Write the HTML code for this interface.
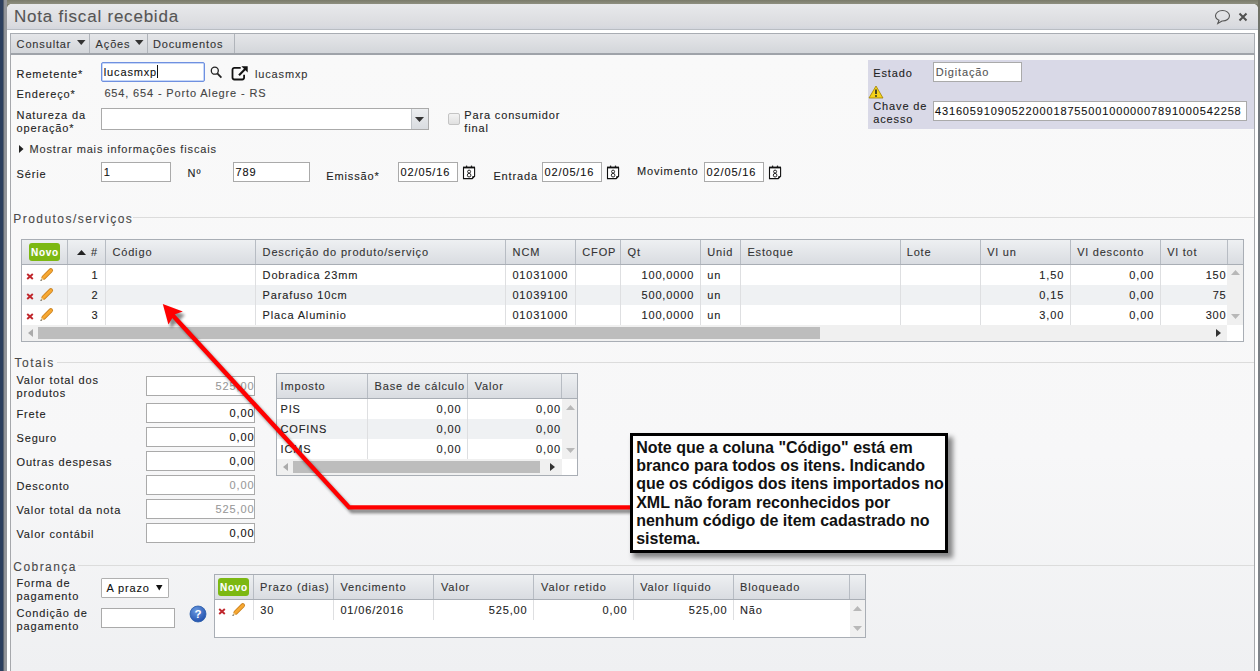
<!DOCTYPE html>
<html><head><meta charset="utf-8"><style>
html,body{margin:0;padding:0;}
body{width:1260px;height:671px;position:relative;overflow:hidden;background:#7d7e6e;font-family:"Liberation Sans",sans-serif;}
.t{position:absolute;white-space:nowrap;font-family:"Liberation Sans",sans-serif;-webkit-text-stroke:0.1px currentColor;}
svg{position:absolute;overflow:visible;}
</style></head><body>

<div style="position:absolute;left:0px;top:0px;width:1260px;height:4px;box-sizing:border-box;background:linear-gradient(#7a7b6a,#8e8f7f);"></div>
<div style="position:absolute;left:0px;top:0px;width:3px;height:671px;box-sizing:border-box;background:#2c3f5e;"></div>
<div style="position:absolute;left:3px;top:0px;width:4px;height:671px;box-sizing:border-box;background:linear-gradient(90deg,#3e4a5a,#94969a 40%);"></div>
<div style="position:absolute;left:1258px;top:0px;width:2px;height:671px;box-sizing:border-box;background:linear-gradient(#6f705f 0px,#70767c 60px,#80848a 671px);"></div>
<div style="position:absolute;left:7px;top:4px;width:1251px;height:667px;box-sizing:border-box;background:#fff;border-radius:5px 5px 0 0;"></div>
<div style="position:absolute;left:10px;top:55px;width:1245px;height:616px;box-sizing:border-box;background:linear-gradient(#f9f9f9 0px,#f7f7f8 400px,#eff0f2 616px);border-left:1px solid #a6a8ac;border-right:1px solid #a6a8ac;"></div>
<div style="position:absolute;left:7px;top:4px;width:1251px;height:26px;box-sizing:border-box;background:linear-gradient(#e8e9eb,#dadbdf 85%,#d3d6dd);border-bottom:1px solid #b9bdc3;border-radius:5px 5px 0 0;"></div>
<div class="t" style="top:7px;font-size:17px;letter-spacing:0.78px;color:#555;line-height:20.4px;left:14.00px;">Nota fiscal recebida</div>
<svg style="left:1214px;top:9px" width="18" height="16" viewBox="0 0 18 16"><path d="M8.5 1.5C4.4 1.5 1.5 3.9 1.5 6.8c0 2 1.4 3.6 3.5 4.5L3.8 14.5l4.2-2.5c.2 0 .4 0 .5 0 4.1 0 7-2.4 7-5.2S12.6 1.5 8.5 1.5z" fill="none" stroke="#555" stroke-width="1.1"/></svg>
<svg style="left:1238px;top:12px" width="10" height="10" viewBox="0 0 10 10"><path d="M1.5 1.5L8.5 8.5M8.5 1.5L1.5 8.5" stroke="#505050" stroke-width="2"/></svg>
<div style="position:absolute;left:10px;top:33px;width:1245px;height:22px;box-sizing:border-box;background:linear-gradient(#e5e6e9,#d3d6da);border:1px solid #a9adb3;border-bottom:2px solid #9fa3a9;"></div>
<div style="position:absolute;left:89px;top:34px;width:1px;height:19px;box-sizing:border-box;background:#b0b4ba;"></div>
<div style="position:absolute;left:147px;top:34px;width:1px;height:19px;box-sizing:border-box;background:#b0b4ba;"></div>
<div style="position:absolute;left:234px;top:34px;width:1px;height:19px;box-sizing:border-box;background:#b0b4ba;"></div>
<div class="t" style="top:38px;font-size:11px;letter-spacing:0.85px;color:#333;line-height:13px;left:16.60px;">Consultar</div>
<svg style="left:77px;top:40px" width="8.5" height="5"><path d="M0 0H8.5L4.25 5z" fill="#333"/></svg>
<div class="t" style="top:38px;font-size:11px;letter-spacing:0.85px;color:#333;line-height:13px;left:95.60px;">Ações</div>
<svg style="left:135px;top:40px" width="8.5" height="5"><path d="M0 0H8.5L4.25 5z" fill="#333"/></svg>
<div class="t" style="top:38px;font-size:11px;letter-spacing:0.85px;color:#333;line-height:13px;left:153.00px;">Documentos</div>
<div class="t" style="top:68px;font-size:11px;letter-spacing:0.85px;color:#222;line-height:13px;left:16.60px;">Remetente*</div>
<div style="position:absolute;left:101px;top:62px;width:104px;height:20px;box-sizing:border-box;background:#fff;border:1px solid #6f90e0;border-radius:2px;box-shadow:inset 0 0 0 0.5px #8fb0f0;"></div>
<div class="t" style="top:66px;font-size:11px;letter-spacing:0.85px;color:#111;line-height:13px;left:103.80px;">lucasmxp</div>
<div style="position:absolute;left:157px;top:65px;width:1px;height:13px;box-sizing:border-box;background:#111;"></div>
<svg style="left:210px;top:66px" width="13" height="13" viewBox="0 0 13 13"><circle cx="4.8" cy="4.7" r="3.5" fill="none" stroke="#222" stroke-width="1.3"/><path d="M7.3 7.3L11.4 11.6" stroke="#222" stroke-width="1.8"/></svg>
<svg style="left:231px;top:65px" width="18" height="16" viewBox="0 0 18 16"><path d="M9.7 2.9H3.4C2.3 2.9 1.5 3.7 1.5 4.8V12.6C1.5 13.7 2.3 14.5 3.4 14.5H11.2C12.3 14.5 13.1 13.7 13.1 12.6V9.8" fill="none" stroke="#111" stroke-width="1.8"/><path d="M8 10.2L14.2 4" stroke="#111" stroke-width="2.1"/><path d="M10.4 1.2H16.7V7.5z" fill="#111"/></svg>
<div class="t" style="top:68px;font-size:11px;letter-spacing:0.85px;color:#333;line-height:13px;left:255.00px;">lucasmxp</div>
<div class="t" style="top:88px;font-size:11px;letter-spacing:0.85px;color:#222;line-height:13px;left:16.60px;">Endereço*</div>
<div class="t" style="top:87px;font-size:11px;letter-spacing:0.85px;color:#444;line-height:13px;left:104.40px;">654, 654 - Porto Alegre - RS</div>
<div class="t" style="top:109px;font-size:11px;letter-spacing:0.85px;color:#222;line-height:13px;left:16.60px;">Natureza da</div>
<div class="t" style="top:122px;font-size:11px;letter-spacing:0.85px;color:#222;line-height:13px;left:16.60px;">operação*</div>
<div style="position:absolute;left:101px;top:108px;width:328px;height:22px;box-sizing:border-box;background:#fff;border:1px solid #aaaaaa;"></div>
<div style="position:absolute;left:411px;top:109px;width:17px;height:20px;box-sizing:border-box;background:linear-gradient(#eceef0,#d9dce0);border-left:1px solid #c0c4c8;"></div>
<svg style="left:415px;top:117px" width="9" height="5"><path d="M0 0H9L4.5 5z" fill="#333"/></svg>
<div style="position:absolute;left:448px;top:113px;width:12px;height:12px;box-sizing:border-box;background:linear-gradient(#f3f3f3,#e0e0e0);border:1px solid #c4c4c4;border-radius:2px;"></div>
<div class="t" style="top:109px;font-size:11px;letter-spacing:0.85px;color:#222;line-height:13px;left:464.30px;">Para consumidor</div>
<div class="t" style="top:122px;font-size:11px;letter-spacing:0.85px;color:#222;line-height:13px;left:464.30px;">final</div>
<svg style="left:19px;top:145px" width="4.5" height="8"><path d="M0 0V8L4.5 4.0z" fill="#222"/></svg>
<div class="t" style="top:143px;font-size:11px;letter-spacing:0.85px;color:#333;line-height:13px;left:29.50px;">Mostrar mais informações fiscais</div>
<div class="t" style="top:168px;font-size:11px;letter-spacing:0.85px;color:#222;line-height:13px;left:16.60px;">Série</div>
<div style="position:absolute;left:101px;top:162px;width:70px;height:20px;box-sizing:border-box;background:#fff;border:1px solid #aaaaaa;"></div>
<div class="t" style="top:166px;font-size:11px;letter-spacing:0.85px;color:#111;line-height:13px;left:103.80px;">1</div>
<div class="t" style="top:167px;font-size:11px;letter-spacing:0.85px;color:#222;line-height:13px;left:187.60px;">Nº</div>
<div style="position:absolute;left:233px;top:162px;width:77px;height:20px;box-sizing:border-box;background:#fff;border:1px solid #aaaaaa;"></div>
<div class="t" style="top:166px;font-size:11px;letter-spacing:0.85px;color:#111;line-height:13px;left:235.60px;">789</div>
<div class="t" style="top:170px;font-size:11px;letter-spacing:0.85px;color:#222;line-height:13px;left:326.30px;">Emissão*</div>
<div style="position:absolute;left:398px;top:162px;width:60px;height:20px;box-sizing:border-box;background:#fff;border:1px solid #aaaaaa;"></div>
<div class="t" style="top:166px;font-size:11px;letter-spacing:0.85px;color:#111;line-height:13px;left:400.60px;">02/05/16</div>
<div class="t" style="top:170px;font-size:11px;letter-spacing:0.85px;color:#222;line-height:13px;left:493.40px;">Entrada</div>
<div style="position:absolute;left:542px;top:162px;width:60px;height:20px;box-sizing:border-box;background:#fff;border:1px solid #aaaaaa;"></div>
<div class="t" style="top:166px;font-size:11px;letter-spacing:0.85px;color:#111;line-height:13px;left:544.60px;">02/05/16</div>
<div class="t" style="top:165px;font-size:11px;letter-spacing:0.85px;color:#222;line-height:13px;left:637.00px;">Movimento</div>
<div style="position:absolute;left:704px;top:162px;width:60px;height:20px;box-sizing:border-box;background:#fff;border:1px solid #aaaaaa;"></div>
<div class="t" style="top:166px;font-size:11px;letter-spacing:0.85px;color:#111;line-height:13px;left:706.60px;">02/05/16</div>
<svg style="left:462px;top:165px" width="14" height="15" viewBox="0 0 14 15"><path d="M1.5 2.6V13.6H10.2L12.6 11.2V2.6" fill="#fff" stroke="#111" stroke-width="1.1"/><path d="M1 2.5H13" stroke="#111" stroke-width="1.8"/><circle cx="4.6" cy="1.2" r="0.8" fill="#111"/><circle cx="9.5" cy="1.2" r="0.8" fill="#111"/><circle cx="7.1" cy="6.6" r="1.5" fill="none" stroke="#111" stroke-width="0.9"/><circle cx="7.1" cy="10.2" r="1.8" fill="none" stroke="#111" stroke-width="0.9"/><path d="M10.2 13.6L12.6 11.2H10.2z" fill="#111"/></svg>
<svg style="left:606px;top:165px" width="14" height="15" viewBox="0 0 14 15"><path d="M1.5 2.6V13.6H10.2L12.6 11.2V2.6" fill="#fff" stroke="#111" stroke-width="1.1"/><path d="M1 2.5H13" stroke="#111" stroke-width="1.8"/><circle cx="4.6" cy="1.2" r="0.8" fill="#111"/><circle cx="9.5" cy="1.2" r="0.8" fill="#111"/><circle cx="7.1" cy="6.6" r="1.5" fill="none" stroke="#111" stroke-width="0.9"/><circle cx="7.1" cy="10.2" r="1.8" fill="none" stroke="#111" stroke-width="0.9"/><path d="M10.2 13.6L12.6 11.2H10.2z" fill="#111"/></svg>
<svg style="left:768px;top:165px" width="14" height="15" viewBox="0 0 14 15"><path d="M1.5 2.6V13.6H10.2L12.6 11.2V2.6" fill="#fff" stroke="#111" stroke-width="1.1"/><path d="M1 2.5H13" stroke="#111" stroke-width="1.8"/><circle cx="4.6" cy="1.2" r="0.8" fill="#111"/><circle cx="9.5" cy="1.2" r="0.8" fill="#111"/><circle cx="7.1" cy="6.6" r="1.5" fill="none" stroke="#111" stroke-width="0.9"/><circle cx="7.1" cy="10.2" r="1.8" fill="none" stroke="#111" stroke-width="0.9"/><path d="M10.2 13.6L12.6 11.2H10.2z" fill="#111"/></svg>
<div style="position:absolute;left:868px;top:60px;width:386px;height:69px;box-sizing:border-box;background:#d9d9e7;"></div>
<div class="t" style="top:67px;font-size:11px;letter-spacing:0.85px;color:#222;line-height:13px;left:873.30px;">Estado</div>
<div style="position:absolute;left:933px;top:62px;width:89px;height:20px;box-sizing:border-box;background:#fff;border:1px solid #aaaaaa;"></div>
<div class="t" style="top:66px;font-size:11px;letter-spacing:0.85px;color:#555;line-height:13px;left:935.70px;">Digitação</div>
<svg style="left:868px;top:85px" width="16" height="14" viewBox="0 0 16 14"><path d="M8 1L15 13H1z" fill="#f5d21a" stroke="#a08000" stroke-width="0.8"/><path d="M8 4.5V9" stroke="#222" stroke-width="1.6"/><circle cx="8" cy="11" r="0.9" fill="#222"/></svg>
<div class="t" style="top:100px;font-size:11px;letter-spacing:0.85px;color:#222;line-height:13px;left:873.30px;">Chave de</div>
<div class="t" style="top:113px;font-size:11px;letter-spacing:0.85px;color:#222;line-height:13px;left:873.30px;">acesso</div>
<div style="position:absolute;left:933px;top:101px;width:314px;height:20px;box-sizing:border-box;background:#fff;border:1px solid #aaaaaa;"></div>
<div class="t" style="top:105px;font-size:11px;letter-spacing:0.85px;color:#111;line-height:13px;left:935.00px;">43160591090522000187550010000007891000542258</div>
<div class="t" style="top:212px;font-size:12px;letter-spacing:1.45px;color:#4a4a4a;line-height:14.4px;left:13.30px;">Produtos/serviços</div>
<div style="position:absolute;left:133px;top:217px;width:1121px;height:1px;box-sizing:border-box;background:#dcdcdc;"></div>
<div style="position:absolute;left:21px;top:239px;width:1223px;height:103px;box-sizing:border-box;background:#fff;border:1px solid #a9aeb5;"></div>
<div style="position:absolute;left:22px;top:240px;width:1221px;height:25px;box-sizing:border-box;background:linear-gradient(#eef0f2,#d9dce1);border-bottom:1px solid #a9aeb5;"></div>
<div style="position:absolute;left:67px;top:240px;width:1px;height:24px;box-sizing:border-box;background:#b7bcc3;"></div>
<div style="position:absolute;left:105px;top:240px;width:1px;height:24px;box-sizing:border-box;background:#b7bcc3;"></div>
<div style="position:absolute;left:255px;top:240px;width:1px;height:24px;box-sizing:border-box;background:#b7bcc3;"></div>
<div style="position:absolute;left:505px;top:240px;width:1px;height:24px;box-sizing:border-box;background:#b7bcc3;"></div>
<div style="position:absolute;left:575px;top:240px;width:1px;height:24px;box-sizing:border-box;background:#b7bcc3;"></div>
<div style="position:absolute;left:620px;top:240px;width:1px;height:24px;box-sizing:border-box;background:#b7bcc3;"></div>
<div style="position:absolute;left:700px;top:240px;width:1px;height:24px;box-sizing:border-box;background:#b7bcc3;"></div>
<div style="position:absolute;left:740px;top:240px;width:1px;height:24px;box-sizing:border-box;background:#b7bcc3;"></div>
<div style="position:absolute;left:900px;top:240px;width:1px;height:24px;box-sizing:border-box;background:#b7bcc3;"></div>
<div style="position:absolute;left:980px;top:240px;width:1px;height:24px;box-sizing:border-box;background:#b7bcc3;"></div>
<div style="position:absolute;left:1070px;top:240px;width:1px;height:24px;box-sizing:border-box;background:#b7bcc3;"></div>
<div style="position:absolute;left:1160px;top:240px;width:1px;height:24px;box-sizing:border-box;background:#b7bcc3;"></div>
<div style="position:absolute;left:1227px;top:240px;width:1px;height:24px;box-sizing:border-box;background:#b7bcc3;"></div>
<div style="position:absolute;left:22px;top:285px;width:1205px;height:20px;box-sizing:border-box;background:#eff1f3;"></div>
<div style="position:absolute;left:67px;top:265px;width:1px;height:60px;box-sizing:border-box;background:#dedfe1;"></div>
<div style="position:absolute;left:105px;top:265px;width:1px;height:60px;box-sizing:border-box;background:#dedfe1;"></div>
<div style="position:absolute;left:255px;top:265px;width:1px;height:60px;box-sizing:border-box;background:#dedfe1;"></div>
<div style="position:absolute;left:505px;top:265px;width:1px;height:60px;box-sizing:border-box;background:#dedfe1;"></div>
<div style="position:absolute;left:575px;top:265px;width:1px;height:60px;box-sizing:border-box;background:#dedfe1;"></div>
<div style="position:absolute;left:620px;top:265px;width:1px;height:60px;box-sizing:border-box;background:#dedfe1;"></div>
<div style="position:absolute;left:700px;top:265px;width:1px;height:60px;box-sizing:border-box;background:#dedfe1;"></div>
<div style="position:absolute;left:740px;top:265px;width:1px;height:60px;box-sizing:border-box;background:#dedfe1;"></div>
<div style="position:absolute;left:900px;top:265px;width:1px;height:60px;box-sizing:border-box;background:#dedfe1;"></div>
<div style="position:absolute;left:980px;top:265px;width:1px;height:60px;box-sizing:border-box;background:#dedfe1;"></div>
<div style="position:absolute;left:1070px;top:265px;width:1px;height:60px;box-sizing:border-box;background:#dedfe1;"></div>
<div style="position:absolute;left:1160px;top:265px;width:1px;height:60px;box-sizing:border-box;background:#dedfe1;"></div>
<div style="position:absolute;left:1227px;top:265px;width:16px;height:60px;box-sizing:border-box;background:#f0f0f0;"></div>
<svg style="left:1231px;top:270px" width="9" height="5"><path d="M0 5H9L4.5 0z" fill="#b8b8b8"/></svg>
<svg style="left:1231px;top:314px" width="9" height="5"><path d="M0 0H9L4.5 5z" fill="#b8b8b8"/></svg>
<div style="position:absolute;left:22px;top:325px;width:1205px;height:16px;box-sizing:border-box;background:#f0f0f0;"></div>
<div style="position:absolute;left:38px;top:327px;width:782px;height:12px;box-sizing:border-box;background:#bdbdbd;"></div>
<svg style="left:28px;top:329px" width="5" height="8"><path d="M5 0V8L0 4.0z" fill="#aaa"/></svg>
<svg style="left:1216px;top:329px" width="5" height="8"><path d="M0 0V8L5 4.0z" fill="#333"/></svg>
<div style="position:absolute;left:1227px;top:325px;width:16px;height:16px;box-sizing:border-box;background:#fff;"></div>
<div style="position:absolute;left:29px;top:243px;width:31px;height:18px;box-sizing:border-box;background:#7cb812;border-radius:3px;"></div>
<div class="t" style="left:29.5px;top:244px;width:31px;height:18px;line-height:18px;text-align:center;color:#fff;font-weight:bold;font-size:10px;letter-spacing:0.7px;">Novo</div>
<svg style="left:77px;top:250px" width="9" height="5"><path d="M0 5H9L4.5 0z" fill="#222"/></svg>
<div class="t" style="top:246px;font-size:11px;letter-spacing:0.85px;color:#333;line-height:13px;left:91.00px;">#</div>
<div class="t" style="top:246px;font-size:11px;letter-spacing:0.85px;color:#333;line-height:13px;left:112.40px;">Código</div>
<div class="t" style="top:246px;font-size:11px;letter-spacing:0.85px;color:#333;line-height:13px;left:262.60px;">Descrição do produto/serviço</div>
<div class="t" style="top:246px;font-size:11px;letter-spacing:0.85px;color:#333;line-height:13px;left:512.60px;">NCM</div>
<div class="t" style="top:246px;font-size:11px;letter-spacing:0.85px;color:#333;line-height:13px;left:582.30px;">CFOP</div>
<div class="t" style="top:246px;font-size:11px;letter-spacing:0.85px;color:#333;line-height:13px;left:627.60px;">Qt</div>
<div class="t" style="top:246px;font-size:11px;letter-spacing:0.85px;color:#333;line-height:13px;left:707.30px;">Unid</div>
<div class="t" style="top:246px;font-size:11px;letter-spacing:0.85px;color:#333;line-height:13px;left:747.40px;">Estoque</div>
<div class="t" style="top:246px;font-size:11px;letter-spacing:0.85px;color:#333;line-height:13px;left:906.70px;">Lote</div>
<div class="t" style="top:246px;font-size:11px;letter-spacing:0.85px;color:#333;line-height:13px;left:987.30px;">Vl un</div>
<div class="t" style="top:246px;font-size:11px;letter-spacing:0.85px;color:#333;line-height:13px;left:1077.30px;">Vl desconto</div>
<div class="t" style="top:246px;font-size:11px;letter-spacing:0.85px;color:#333;line-height:13px;left:1167.30px;">Vl tot</div>
<svg style="left:26px;top:273px" width="8" height="7" viewBox="0 0 8 7"><path d="M1.2 1L6.8 6M6.8 1L1.2 6" stroke="#c0272d" stroke-width="1.9"/></svg>
<svg style="left:40px;top:268px" width="14" height="14" viewBox="0 0 14 14"><path d="M3.6 9.6L10.8 2.4" stroke="#c9801f" stroke-width="4.4" stroke-linecap="round"/><path d="M3.6 9.6L10.8 2.4" stroke="#f7a832" stroke-width="2.8" stroke-linecap="round"/><path d="M0.5 12.8L1.6 9.4L4 11.8z" fill="#f3d7a0"/><path d="M0.4 12.9L1 11.2L2.1 12.3z" fill="#333"/></svg>
<div class="t" style="top:269px;font-size:11px;letter-spacing:0.85px;color:#222;line-height:13px;right:1161.65px;">1</div>
<div class="t" style="top:269px;font-size:11px;letter-spacing:0.85px;color:#222;line-height:13px;left:262.60px;">Dobradica 23mm</div>
<div class="t" style="top:269px;font-size:11px;letter-spacing:0.85px;color:#222;line-height:13px;left:512.40px;">01031000</div>
<div class="t" style="top:269px;font-size:11px;letter-spacing:0.85px;color:#222;line-height:13px;right:565.85px;">100,0000</div>
<div class="t" style="top:269px;font-size:11px;letter-spacing:0.85px;color:#222;line-height:13px;left:707.30px;">un</div>
<div class="t" style="top:269px;font-size:11px;letter-spacing:0.85px;color:#222;line-height:13px;right:195.85px;">1,50</div>
<div class="t" style="top:269px;font-size:11px;letter-spacing:0.85px;color:#222;line-height:13px;right:105.85px;">0,00</div>
<div class="t" style="top:269px;font-size:11px;letter-spacing:0.85px;color:#222;line-height:13px;right:33.45px;">150</div>
<svg style="left:26px;top:293px" width="8" height="7" viewBox="0 0 8 7"><path d="M1.2 1L6.8 6M6.8 1L1.2 6" stroke="#c0272d" stroke-width="1.9"/></svg>
<svg style="left:40px;top:288px" width="14" height="14" viewBox="0 0 14 14"><path d="M3.6 9.6L10.8 2.4" stroke="#c9801f" stroke-width="4.4" stroke-linecap="round"/><path d="M3.6 9.6L10.8 2.4" stroke="#f7a832" stroke-width="2.8" stroke-linecap="round"/><path d="M0.5 12.8L1.6 9.4L4 11.8z" fill="#f3d7a0"/><path d="M0.4 12.9L1 11.2L2.1 12.3z" fill="#333"/></svg>
<div class="t" style="top:289px;font-size:11px;letter-spacing:0.85px;color:#222;line-height:13px;right:1161.65px;">2</div>
<div class="t" style="top:289px;font-size:11px;letter-spacing:0.85px;color:#222;line-height:13px;left:262.60px;">Parafuso 10cm</div>
<div class="t" style="top:289px;font-size:11px;letter-spacing:0.85px;color:#222;line-height:13px;left:512.40px;">01039100</div>
<div class="t" style="top:289px;font-size:11px;letter-spacing:0.85px;color:#222;line-height:13px;right:565.85px;">500,0000</div>
<div class="t" style="top:289px;font-size:11px;letter-spacing:0.85px;color:#222;line-height:13px;left:707.30px;">un</div>
<div class="t" style="top:289px;font-size:11px;letter-spacing:0.85px;color:#222;line-height:13px;right:195.85px;">0,15</div>
<div class="t" style="top:289px;font-size:11px;letter-spacing:0.85px;color:#222;line-height:13px;right:105.85px;">0,00</div>
<div class="t" style="top:289px;font-size:11px;letter-spacing:0.85px;color:#222;line-height:13px;right:33.45px;">75</div>
<svg style="left:26px;top:313px" width="8" height="7" viewBox="0 0 8 7"><path d="M1.2 1L6.8 6M6.8 1L1.2 6" stroke="#c0272d" stroke-width="1.9"/></svg>
<svg style="left:40px;top:308px" width="14" height="14" viewBox="0 0 14 14"><path d="M3.6 9.6L10.8 2.4" stroke="#c9801f" stroke-width="4.4" stroke-linecap="round"/><path d="M3.6 9.6L10.8 2.4" stroke="#f7a832" stroke-width="2.8" stroke-linecap="round"/><path d="M0.5 12.8L1.6 9.4L4 11.8z" fill="#f3d7a0"/><path d="M0.4 12.9L1 11.2L2.1 12.3z" fill="#333"/></svg>
<div class="t" style="top:309px;font-size:11px;letter-spacing:0.85px;color:#222;line-height:13px;right:1161.65px;">3</div>
<div class="t" style="top:309px;font-size:11px;letter-spacing:0.85px;color:#222;line-height:13px;left:262.60px;">Placa Aluminio</div>
<div class="t" style="top:309px;font-size:11px;letter-spacing:0.85px;color:#222;line-height:13px;left:512.40px;">01031000</div>
<div class="t" style="top:309px;font-size:11px;letter-spacing:0.85px;color:#222;line-height:13px;right:565.85px;">100,0000</div>
<div class="t" style="top:309px;font-size:11px;letter-spacing:0.85px;color:#222;line-height:13px;left:707.30px;">un</div>
<div class="t" style="top:309px;font-size:11px;letter-spacing:0.85px;color:#222;line-height:13px;right:195.85px;">3,00</div>
<div class="t" style="top:309px;font-size:11px;letter-spacing:0.85px;color:#222;line-height:13px;right:105.85px;">0,00</div>
<div class="t" style="top:309px;font-size:11px;letter-spacing:0.85px;color:#222;line-height:13px;right:33.45px;">300</div>
<div class="t" style="top:356px;font-size:12px;letter-spacing:1.45px;color:#4a4a4a;line-height:14.4px;left:14.60px;">Totais</div>
<div style="position:absolute;left:57px;top:362px;width:1197px;height:1px;box-sizing:border-box;background:#dcdcdc;"></div>
<div style="position:absolute;left:146px;top:376px;width:109px;height:20px;box-sizing:border-box;background:#fff;border:1px solid #aaaaaa;"></div>
<div class="t" style="top:380px;font-size:11px;letter-spacing:0.85px;color:#999;line-height:13px;right:1005.65px;">525,00</div>
<div class="t" style="top:374px;font-size:11px;letter-spacing:0.85px;color:#222;line-height:13px;left:16.50px;">Valor total dos</div>
<div class="t" style="top:387px;font-size:11px;letter-spacing:0.85px;color:#222;line-height:13px;left:16.50px;">produtos</div>
<div style="position:absolute;left:146px;top:403px;width:109px;height:20px;box-sizing:border-box;background:#fff;border:1px solid #aaaaaa;"></div>
<div class="t" style="top:407px;font-size:11px;letter-spacing:0.85px;color:#111;line-height:13px;right:1005.65px;">0,00</div>
<div class="t" style="top:408px;font-size:11px;letter-spacing:0.85px;color:#222;line-height:13px;left:16.50px;">Frete</div>
<div style="position:absolute;left:146px;top:427px;width:109px;height:20px;box-sizing:border-box;background:#fff;border:1px solid #aaaaaa;"></div>
<div class="t" style="top:431px;font-size:11px;letter-spacing:0.85px;color:#111;line-height:13px;right:1005.65px;">0,00</div>
<div class="t" style="top:432px;font-size:11px;letter-spacing:0.85px;color:#222;line-height:13px;left:16.50px;">Seguro</div>
<div style="position:absolute;left:146px;top:451px;width:109px;height:20px;box-sizing:border-box;background:#fff;border:1px solid #aaaaaa;"></div>
<div class="t" style="top:455px;font-size:11px;letter-spacing:0.85px;color:#111;line-height:13px;right:1005.65px;">0,00</div>
<div class="t" style="top:456px;font-size:11px;letter-spacing:0.85px;color:#222;line-height:13px;left:16.50px;">Outras despesas</div>
<div style="position:absolute;left:146px;top:475px;width:109px;height:20px;box-sizing:border-box;background:#fff;border:1px solid #aaaaaa;"></div>
<div class="t" style="top:479px;font-size:11px;letter-spacing:0.85px;color:#999;line-height:13px;right:1005.65px;">0,00</div>
<div class="t" style="top:480px;font-size:11px;letter-spacing:0.85px;color:#222;line-height:13px;left:16.50px;">Desconto</div>
<div style="position:absolute;left:146px;top:499px;width:109px;height:20px;box-sizing:border-box;background:#fff;border:1px solid #aaaaaa;"></div>
<div class="t" style="top:503px;font-size:11px;letter-spacing:0.85px;color:#999;line-height:13px;right:1005.65px;">525,00</div>
<div class="t" style="top:504px;font-size:11px;letter-spacing:0.85px;color:#222;line-height:13px;left:16.50px;">Valor total da nota</div>
<div style="position:absolute;left:146px;top:523px;width:109px;height:20px;box-sizing:border-box;background:#fff;border:1px solid #aaaaaa;"></div>
<div class="t" style="top:527px;font-size:11px;letter-spacing:0.85px;color:#111;line-height:13px;right:1005.65px;">0,00</div>
<div class="t" style="top:528px;font-size:11px;letter-spacing:0.85px;color:#222;line-height:13px;left:16.50px;">Valor contábil</div>
<div style="position:absolute;left:276px;top:373px;width:302px;height:103px;box-sizing:border-box;background:#fff;border:1px solid #a9aeb5;"></div>
<div style="position:absolute;left:277px;top:374px;width:300px;height:25px;box-sizing:border-box;background:linear-gradient(#eef0f2,#d9dce1);border-bottom:1px solid #a9aeb5;"></div>
<div style="position:absolute;left:367px;top:374px;width:1px;height:24px;box-sizing:border-box;background:#b7bcc3;"></div>
<div style="position:absolute;left:467px;top:374px;width:1px;height:24px;box-sizing:border-box;background:#b7bcc3;"></div>
<div style="position:absolute;left:561px;top:374px;width:1px;height:24px;box-sizing:border-box;background:#b7bcc3;"></div>
<div style="position:absolute;left:277px;top:419px;width:285px;height:20px;box-sizing:border-box;background:#eff1f3;"></div>
<div style="position:absolute;left:367px;top:399px;width:1px;height:60px;box-sizing:border-box;background:#dedfe1;"></div>
<div style="position:absolute;left:467px;top:399px;width:1px;height:60px;box-sizing:border-box;background:#dedfe1;"></div>
<div style="position:absolute;left:562px;top:399px;width:15px;height:60px;box-sizing:border-box;background:#f0f0f0;"></div>
<div style="position:absolute;left:277px;top:459px;width:285px;height:16px;box-sizing:border-box;background:#f0f0f0;"></div>
<div style="position:absolute;left:293px;top:461px;width:247px;height:12px;box-sizing:border-box;background:#bdbdbd;"></div>
<svg style="left:566px;top:405px" width="9" height="5"><path d="M0 5H9L4.5 0z" fill="#b8b8b8"/></svg>
<svg style="left:566px;top:448px" width="9" height="5"><path d="M0 0H9L4.5 5z" fill="#b8b8b8"/></svg>
<svg style="left:283px;top:463px" width="5" height="8"><path d="M5 0V8L0 4.0z" fill="#aaa"/></svg>
<svg style="left:550px;top:463px" width="5" height="8"><path d="M0 0V8L5 4.0z" fill="#333"/></svg>
<div class="t" style="top:380px;font-size:11px;letter-spacing:0.85px;color:#333;line-height:13px;left:280.50px;">Imposto</div>
<div class="t" style="top:380px;font-size:11px;letter-spacing:0.85px;color:#333;line-height:13px;left:374.60px;">Base de cálculo</div>
<div class="t" style="top:380px;font-size:11px;letter-spacing:0.85px;color:#333;line-height:13px;left:474.70px;">Valor</div>
<div class="t" style="top:403px;font-size:11px;letter-spacing:0.85px;color:#222;line-height:13px;left:280.50px;">PIS</div>
<div class="t" style="top:403px;font-size:11px;letter-spacing:0.85px;color:#222;line-height:13px;right:798.65px;">0,00</div>
<div class="t" style="top:403px;font-size:11px;letter-spacing:0.85px;color:#222;line-height:13px;right:699.15px;">0,00</div>
<div class="t" style="top:423px;font-size:11px;letter-spacing:0.85px;color:#222;line-height:13px;left:280.50px;">COFINS</div>
<div class="t" style="top:423px;font-size:11px;letter-spacing:0.85px;color:#222;line-height:13px;right:798.65px;">0,00</div>
<div class="t" style="top:423px;font-size:11px;letter-spacing:0.85px;color:#222;line-height:13px;right:699.15px;">0,00</div>
<div class="t" style="top:443px;font-size:11px;letter-spacing:0.85px;color:#222;line-height:13px;left:280.50px;">ICMS</div>
<div class="t" style="top:443px;font-size:11px;letter-spacing:0.85px;color:#222;line-height:13px;right:798.65px;">0,00</div>
<div class="t" style="top:443px;font-size:11px;letter-spacing:0.85px;color:#222;line-height:13px;right:699.15px;">0,00</div>
<div class="t" style="top:560px;font-size:12px;letter-spacing:1.45px;color:#4a4a4a;line-height:14.4px;left:13.30px;">Cobrança</div>
<div style="position:absolute;left:78px;top:565px;width:1176px;height:1px;box-sizing:border-box;background:#dcdcdc;"></div>
<div class="t" style="top:577px;font-size:11px;letter-spacing:0.85px;color:#222;line-height:13px;left:16.50px;">Forma de</div>
<div class="t" style="top:590px;font-size:11px;letter-spacing:0.85px;color:#222;line-height:13px;left:16.50px;">pagamento</div>
<div style="position:absolute;left:101px;top:578px;width:68px;height:20px;box-sizing:border-box;background:#fff;border:1px solid #b0b0b0;border-radius:1px;"></div>
<div class="t" style="top:582px;font-size:11px;letter-spacing:0.85px;color:#111;line-height:13px;left:106.50px;">A prazo</div>
<svg style="left:156px;top:585px" width="6.5" height="5.5"><path d="M0 0H6.5L3.25 5.5z" fill="#111"/></svg>
<div class="t" style="top:607px;font-size:11px;letter-spacing:0.85px;color:#222;line-height:13px;left:16.50px;">Condição de</div>
<div class="t" style="top:620px;font-size:11px;letter-spacing:0.85px;color:#222;line-height:13px;left:16.50px;">pagamento</div>
<div style="position:absolute;left:101px;top:608px;width:74px;height:20px;box-sizing:border-box;background:#fff;border:1px solid #aaaaaa;"></div>
<svg style="left:189px;top:605px" width="18" height="18" viewBox="0 0 18 18"><defs><radialGradient id="hg" cx="0.4" cy="0.3" r="0.8"><stop offset="0" stop-color="#6a9ae0"/><stop offset="1" stop-color="#1a48a8"/></radialGradient></defs><circle cx="9" cy="9" r="8" fill="url(#hg)" stroke="#2a5da8" stroke-width="0.8"/><text x="9" y="13.2" font-size="11.5" font-weight="bold" text-anchor="middle" fill="#fff" font-family="Liberation Sans">?</text></svg>
<div style="position:absolute;left:214px;top:574px;width:652px;height:64px;box-sizing:border-box;background:#fff;border:1px solid #a9aeb5;"></div>
<div style="position:absolute;left:215px;top:575px;width:650px;height:25px;box-sizing:border-box;background:linear-gradient(#eef0f2,#d9dce1);border-bottom:1px solid #a9aeb5;"></div>
<div style="position:absolute;left:253px;top:575px;width:1px;height:24px;box-sizing:border-box;background:#b7bcc3;"></div>
<div style="position:absolute;left:333px;top:575px;width:1px;height:24px;box-sizing:border-box;background:#b7bcc3;"></div>
<div style="position:absolute;left:433px;top:575px;width:1px;height:24px;box-sizing:border-box;background:#b7bcc3;"></div>
<div style="position:absolute;left:533px;top:575px;width:1px;height:24px;box-sizing:border-box;background:#b7bcc3;"></div>
<div style="position:absolute;left:633px;top:575px;width:1px;height:24px;box-sizing:border-box;background:#b7bcc3;"></div>
<div style="position:absolute;left:733px;top:575px;width:1px;height:24px;box-sizing:border-box;background:#b7bcc3;"></div>
<div style="position:absolute;left:849px;top:575px;width:1px;height:24px;box-sizing:border-box;background:#b7bcc3;"></div>
<div style="position:absolute;left:253px;top:600px;width:1px;height:20px;box-sizing:border-box;background:#dedfe1;"></div>
<div style="position:absolute;left:333px;top:600px;width:1px;height:20px;box-sizing:border-box;background:#dedfe1;"></div>
<div style="position:absolute;left:433px;top:600px;width:1px;height:20px;box-sizing:border-box;background:#dedfe1;"></div>
<div style="position:absolute;left:533px;top:600px;width:1px;height:20px;box-sizing:border-box;background:#dedfe1;"></div>
<div style="position:absolute;left:633px;top:600px;width:1px;height:20px;box-sizing:border-box;background:#dedfe1;"></div>
<div style="position:absolute;left:733px;top:600px;width:1px;height:20px;box-sizing:border-box;background:#dedfe1;"></div>
<div style="position:absolute;left:850px;top:600px;width:15px;height:37px;box-sizing:border-box;background:#f0f0f0;"></div>
<svg style="left:853px;top:606px" width="9" height="5"><path d="M0 5H9L4.5 0z" fill="#b8b8b8"/></svg>
<svg style="left:853px;top:626px" width="9" height="5"><path d="M0 0H9L4.5 5z" fill="#b8b8b8"/></svg>
<div style="position:absolute;left:218px;top:578px;width:31px;height:18px;box-sizing:border-box;background:#7cb812;border-radius:3px;"></div>
<div class="t" style="left:218.5px;top:579px;width:31px;height:18px;line-height:18px;text-align:center;color:#fff;font-weight:bold;font-size:10px;letter-spacing:0.7px;">Novo</div>
<div class="t" style="top:581px;font-size:11px;letter-spacing:0.85px;color:#333;line-height:13px;left:260.10px;">Prazo (dias)</div>
<div class="t" style="top:581px;font-size:11px;letter-spacing:0.85px;color:#333;line-height:13px;left:340.40px;">Vencimento</div>
<div class="t" style="top:581px;font-size:11px;letter-spacing:0.85px;color:#333;line-height:13px;left:441.00px;">Valor</div>
<div class="t" style="top:581px;font-size:11px;letter-spacing:0.85px;color:#333;line-height:13px;left:541.10px;">Valor retido</div>
<div class="t" style="top:581px;font-size:11px;letter-spacing:0.85px;color:#333;line-height:13px;left:640.20px;">Valor líquido</div>
<div class="t" style="top:581px;font-size:11px;letter-spacing:0.85px;color:#333;line-height:13px;left:740.00px;">Bloqueado</div>
<svg style="left:218px;top:608px" width="8" height="7" viewBox="0 0 8 7"><path d="M1.2 1L6.8 6M6.8 1L1.2 6" stroke="#c0272d" stroke-width="1.9"/></svg>
<svg style="left:232px;top:603px" width="14" height="14" viewBox="0 0 14 14"><path d="M3.6 9.6L10.8 2.4" stroke="#c9801f" stroke-width="4.4" stroke-linecap="round"/><path d="M3.6 9.6L10.8 2.4" stroke="#f7a832" stroke-width="2.8" stroke-linecap="round"/><path d="M0.5 12.8L1.6 9.4L4 11.8z" fill="#f3d7a0"/><path d="M0.4 12.9L1 11.2L2.1 12.3z" fill="#333"/></svg>
<div class="t" style="top:604px;font-size:11px;letter-spacing:0.85px;color:#222;line-height:13px;left:260.30px;">30</div>
<div class="t" style="top:604px;font-size:11px;letter-spacing:0.85px;color:#222;line-height:13px;left:340.40px;">01/06/2016</div>
<div class="t" style="top:604px;font-size:11px;letter-spacing:0.85px;color:#222;line-height:13px;right:732.45px;">525,00</div>
<div class="t" style="top:604px;font-size:11px;letter-spacing:0.85px;color:#222;line-height:13px;right:632.65px;">0,00</div>
<div class="t" style="top:604px;font-size:11px;letter-spacing:0.85px;color:#222;line-height:13px;right:532.45px;">525,00</div>
<div class="t" style="top:604px;font-size:11px;letter-spacing:0.85px;color:#222;line-height:13px;left:740.00px;">Não</div>
<svg style="left:0;top:0" width="1260" height="671"><defs><filter id="sh" x="-10%" y="-10%" width="130%" height="130%"><feGaussianBlur stdDeviation="1.6"/></filter></defs><g filter="url(#sh)" opacity="0.45"><path d="M174 317L352 511H632" fill="none" stroke="#000" stroke-width="4.5"/><path d="M165.5 307L185 315L171 328z" fill="#000"/></g><path d="M171.5 314L349.2 507.4H630" fill="none" stroke="#f00" stroke-width="4.4" stroke-linejoin="miter"/><path d="M162.8 303.9L182.8 311.4L174.5 314.5L168.4 324.6z" fill="#f00"/></svg>
<div style="position:absolute;left:633px;top:437px;width:320px;height:121px;box-sizing:border-box;background:rgba(0,0,0,0.45);filter:blur(2.5px);"></div>
<div style="position:absolute;left:630px;top:433px;width:318px;height:120px;box-sizing:border-box;background:#fff;border:3px solid #000;"></div>
<div class="t" style="top:438px;font-size:16px;letter-spacing:0px;color:#111;line-height:19.2px;font-weight:bold;-webkit-text-stroke:0;left:636.20px;">Note que a coluna "Código" está em</div>
<div class="t" style="top:456px;font-size:16px;letter-spacing:0px;color:#111;line-height:19.2px;font-weight:bold;-webkit-text-stroke:0;left:636.20px;">branco para todos os itens. Indicando</div>
<div class="t" style="top:474px;font-size:16px;letter-spacing:0px;color:#111;line-height:19.2px;font-weight:bold;-webkit-text-stroke:0;left:636.20px;">que os códigos dos itens importados no</div>
<div class="t" style="top:493px;font-size:16px;letter-spacing:0px;color:#111;line-height:19.2px;font-weight:bold;-webkit-text-stroke:0;left:636.20px;">XML não foram reconhecidos por</div>
<div class="t" style="top:511px;font-size:16px;letter-spacing:0px;color:#111;line-height:19.2px;font-weight:bold;-webkit-text-stroke:0;left:636.20px;">nenhum código de item cadastrado no</div>
<div class="t" style="top:529px;font-size:16px;letter-spacing:0px;color:#111;line-height:19.2px;font-weight:bold;-webkit-text-stroke:0;left:636.20px;">sistema.</div>
</body></html>
